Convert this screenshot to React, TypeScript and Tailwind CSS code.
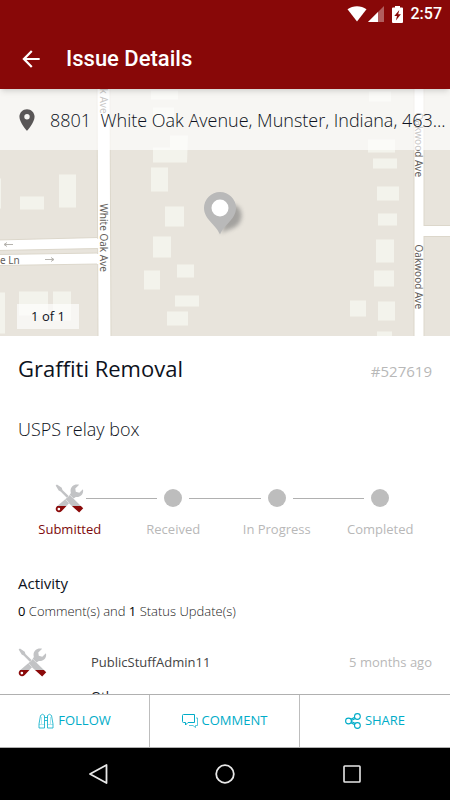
import React from 'react';
import { MdArrowBack, MdPlace } from 'react-icons/md';

const steps = ['Submitted', 'Received', 'In Progress', 'Completed'];

const buildings = [
  [151, 90, 27, 9], [153, 107, 21, 18], [151, 167, 17, 24], [59, 174, 17, 33], [20, 196, 24, 13],
  [-2, 178, 3, 30], [165, 206, 19, 20], [153, 236, 18, 21], [177, 264, 17, 13], [144, 270, 16, 19],
  [175, 295, 24, 11], [167, 311, 21, 14], [-2, 292, 7, 41], [19, 291, 29, 24], [53, 291, 18, 29],
  [369, 91, 22, 10], [368, 139, 27, 13], [373, 158, 24, 10], [377, 186, 22, 14], [378, 213, 19, 12],
  [376, 239, 18, 23], [374, 270, 20, 16], [350, 300, 16, 16], [378, 301, 17, 19], [377, 331, 15, 8],
];

const StatusBar = () => (
  <div className="flex h-7 items-center justify-end pr-2 text-white">
    <svg className="h-4 w-5" viewBox="0 0 20 16" fill="currentColor">
      <path d="M.5 3.2C6-.9 14-.9 19.500 3.200L10 15.500z" />
    </svg>
    <svg className="ml-px h-4 w-4" viewBox="0 0 16 16" fill="currentColor">
      <path d="M16 0v16H0z" opacity=".35" />
      <path d="M10 6v10H0z" />
    </svg>
    <svg className="ml-2 h-[17px] w-[11px]" viewBox="0 0 11 17" fill="currentColor">
      <path fillRule="evenodd" d="M3 0h5v1.500h2q1 0 1 1V16q0 1-1 1H1q-1 0-1-1V2.500q0-1 1-1h2zM7.300 4L2.300 10H5L3.900 14.500L8.900 8.300H6.200z" />
    </svg>
    <span className="ml-2 font-[Roboto,sans-serif] text-base font-medium">2:57</span>
  </div>
);

const IssueMap = () => (
  <svg className="absolute inset-0 h-full w-full" viewBox="0 88 450 248" preserveAspectRatio="xMidYMid slice">
    <defs>
      <filter id="pin-shadow" x="-50%" y="-50%" width="200%" height="200%">
        <feGaussianBlur stdDeviation="2" />
      </filter>
    </defs>
    <rect y="88" width="450" height="248" fill="#e8e4dc" />
    <g fill="#f3f3ec">
      {buildings.map(([x, y, w, h]) => (
        <rect key={`${x}-${y}`} x={x} y={y} width={w} height={h} />
      ))}
      <path d="M170 135H188L187 162H153V147H170z" />
    </g>
    <g fill="#fff" stroke="#dcd7cb" strokeWidth="1">
      <path d="M-2 239.500L98 237V248L-2 250z" />
      <path d="M-2 254L98 252.500V263.500L-2 265z" />
      <path d="M424 225H452V236H424z" />
      <path d="M97 80H110L111 340H98z" />
      <path d="M414 80H424V340H414z" />
    </g>
    <path d="M97 238.200H99V247.500H97zM97 253.600H99V263.500H97zM423 225.500H425V235.500H423z" fill="#fff" />
    <g fill="none" stroke="#b5b3ae" strokeWidth="1">
      <path d="M13 244H4M7 242L4 244L7 246" />
      <path d="M45 259H54M51 257L54 259L51 261" />
    </g>
    <g fill="#635e5b" className="font-['Noto_Sans','Open_Sans',sans-serif] text-[10px]">
      <text transform="translate(100 203) rotate(90)">White Oak Ave</text>
      <text transform="translate(100 88) rotate(90)">k Ave</text>
      <text transform="translate(415 244) rotate(90)">Oakwood Ave</text>
      <text transform="translate(415 112) rotate(90)">Oakwood Ave</text>
      <text x="0" y="263">e Ln</text>
    </g>
    <path d="M221 233C226 222 224 204 233 204C244 206 244 221 236 226C231 229 225 230 221 233z" fill="#777" opacity=".6" filter="url(#pin-shadow)" />
    <path d="M220 234C216 224 204 219 204 207.500A16 16 0 0 1 236 207.500C236 219 224 224 220 234z" fill="#b9b9b9" />
    <circle cx="220" cy="207.500" r="8.500" fill="#fff" />
  </svg>
);

const ToolsIcon = ({ id }: { id: string }) => (
  <svg className="size-[29px] shrink-0" viewBox="0 0 29 30">
    <defs>
      <linearGradient id={id} gradientUnits="userSpaceOnUse" x1="0" y1="0" x2="0" y2="30">
        <stop offset=".75" stopColor="#c2c3c5" />
        <stop offset=".75" stopColor="#8b0a0a" />
      </linearGradient>
    </defs>
    <g fill={`url(#${id})`}>
      <path fillRule="evenodd" d="M24.500 .8C19-.8 14.300 3.500 15.900 9.300L14 12.500L1.300 23.200C-2 27 3 31.500 6.500 28L18.300 15.300L21 13.400C26 14 29.500 10 28.400 5.500L24.600 9L21 7.900L20.500 4.600zM3.500 24.500A1.400 1.400 0 1 1 3.500 27.300A1.400 1.400 0 1 1 3.500 24.500z" />
      <path d="M.2 1.600L1.500 .5L6.500 4L7.200 6.200L13.600 12.400L11.700 14.300L5.300 7.700L3.300 6.800z" />
      <path d="M19 15.500L28.700 25L24.500 29.600L14.200 20.200Q12.700 18.600 14.200 17.100L16 15.300Q17.500 14 19 15.500z" />
    </g>
    <path d="M10.500 16L13.800 19.500M15 11.500L18.500 15" stroke="#fff" strokeWidth=".5" />
  </svg>
);

const FollowIcon = () => (
  <svg className="size-4" viewBox="0 0 16 16" fill="none" stroke="currentColor" strokeWidth=".8">
    <path d="M1 11L2.500 2.500Q4.500 0 6.500 2.500V15H1zM15 11L13.500 2.500Q11.500 0 9.500 2.500V15H15zM6.500 4.500H9.500M6.500 7.500H9.500" />
    <path d="M1 11.500H6.500M9.500 11.500H15M3.500 4V11M12.500 4V11" opacity=".4" />
  </svg>
);

const CommentIcon = () => (
  <svg className="size-4" viewBox="0 0 16 16" fill="none" stroke="currentColor" strokeWidth="1">
    <path d="M1.500 1.500H12.500V9.500H6L3.500 12V9.500H1.500Q.5 9.500 .5 8.500V2.500Q.5 1.500 1.500 1.500z" />
    <path d="M14 5H15.500V12.500H13.500V14.500L11 12.500H7" opacity=".65" />
  </svg>
);

const ShareIcon = () => (
  <svg className="size-4" viewBox="0 0 16 16" fill="none" stroke="currentColor" strokeWidth="1.100">
    <circle cx="3.500" cy="8" r="2.900" />
    <circle cx="12.400" cy="3.500" r="2.900" />
    <circle cx="12.400" cy="12.500" r="2.900" />
    <path d="M5.800 6.200L9.800 4.200M6.300 7.500L10.500 5.500M5.800 9.800L9.800 11.800M6.300 8.500L10.500 10.500" />
  </svg>
);

const actions = [
  { label: 'FOLLOW', Icon: FollowIcon },
  { label: 'COMMENT', Icon: CommentIcon },
  { label: 'SHARE', Icon: ShareIcon },
];

const App = () => {
  return (
    <div className="flex h-screen flex-col bg-white font-['Open_Sans','Noto_Sans',sans-serif] text-[#0d1220]">
      <header className="relative z-10 shrink-0 bg-[#880808] shadow-md">
        <StatusBar />
        <div className="flex h-[61px] items-center gap-[22px] px-[18px] text-white">
          <button type="button" aria-label="Back">
            <MdArrowBack className="size-[26px]" />
          </button>
          <h1 className="font-[Roboto,sans-serif] text-[22px] leading-7 font-medium">Issue Details</h1>
        </div>
      </header>

      <section className="relative flex h-[247px] shrink-0 flex-col justify-between overflow-hidden">
        <IssueMap />
        <div className="relative flex h-[61px] items-center gap-[10px] bg-white/65 pl-[14px]">
          <MdPlace className="size-[26px] shrink-0 text-[#595656]" />
          <p className="text-[18px] leading-6 font-[350] whitespace-pre">8801  White Oak Avenue, Munster, Indiana, 463...</p>
        </div>
        <div className="relative mb-[7px] ml-[17px] w-[62px] self-start bg-white/65 text-center text-[13px] leading-[25px]">1 of 1</div>
      </section>

      <main className="min-h-0 flex-1 overflow-y-auto px-[18px] pt-5 [scrollbar-width:none]">
        <div className="flex h-6 items-baseline justify-between">
          <h2 className="text-[22px] leading-6">Graffiti Removal</h2>
          <span className="text-[15px] leading-6 text-[#b8b8b8]">#527619</span>
        </div>
        <p className="mt-[37px] text-[18px] leading-6 font-[350]">USPS relay box</p>

        <ol className="mt-10 grid grid-cols-4">
          {steps.map((step, i) => (
            <li key={step}>
              <div className="flex h-[34px] items-center">
                <span className={i === 0 ? 'flex-1' : 'h-px flex-1 bg-[#b0b0b0]'} />
                <span className="flex w-8 justify-center">
                  {i === 0 ? <ToolsIcon id="tools-step" /> : <span className="size-[18px] rounded-full bg-[#bdbdbd]" />}
                </span>
                <span className={i === steps.length - 1 ? 'flex-1' : 'h-px flex-1 bg-[#b0b0b0]'} />
              </div>
              <div className={i === 0 ? 'mt-1 text-center text-[13px] leading-5 text-[#7d0a0a]' : 'mt-1 text-center text-[13px] leading-5 text-[#b8b8b8]'}>
                {step}
              </div>
            </li>
          ))}
        </ol>

        <h3 className="mt-[34px] text-[15px] leading-5">Activity</h3>
        <p className="mt-2 text-[13px] leading-5 font-[350] text-[#222]">
          <span className="font-normal text-black">0</span> Comment(s) and <span className="font-normal text-black">1</span> Status Update(s)
        </p>

        <article className="mt-[27px] flex">
          <ToolsIcon id="tools-activity" />
          <div className="ml-11 flex-1 pt-1 text-[13px] leading-5">
            <div className="flex justify-between">
              <span className="text-[#444]">PublicStuffAdmin11</span>
              <span className="text-[#b8b8b8]">5 months ago</span>
            </div>
            <p className="mt-[14px]">Other</p>
          </div>
        </article>
      </main>

      <footer className="shrink-0">
        <div className="grid h-[54px] grid-cols-3 divide-x divide-[#bdbdbd] border-y border-[#b0b0b0]">
          {actions.map(({ label, Icon }) => (
            <button key={label} type="button" className="flex items-center justify-center gap-1 text-[13px] text-[#00acc8]">
              <Icon />
              {label}
            </button>
          ))}
        </div>
        <nav className="grid h-[52px] grid-cols-3 bg-black px-[34px] text-[#e8e8e8]">
          <button type="button" aria-label="Back" className="flex items-center justify-center">
            <svg className="size-5" viewBox="0 0 20 20" fill="none" stroke="currentColor" strokeWidth="1.800" strokeLinejoin="round">
              <path d="M18.500 1V19L2 10z" />
            </svg>
          </button>
          <button type="button" aria-label="Home" className="flex items-center justify-center">
            <svg className="size-5" viewBox="0 0 20 20" fill="none" stroke="currentColor" strokeWidth="1.800">
              <circle cx="10" cy="10" r="8.800" />
            </svg>
          </button>
          <button type="button" aria-label="Recents" className="flex items-center justify-center">
            <svg className="size-5" viewBox="0 0 20 20" fill="none" stroke="currentColor" strokeWidth="1.600">
              <rect x="2" y="2" width="16" height="16" rx=".8" />
            </svg>
          </button>
        </nav>
      </footer>
    </div>
  );
};

export default App;
